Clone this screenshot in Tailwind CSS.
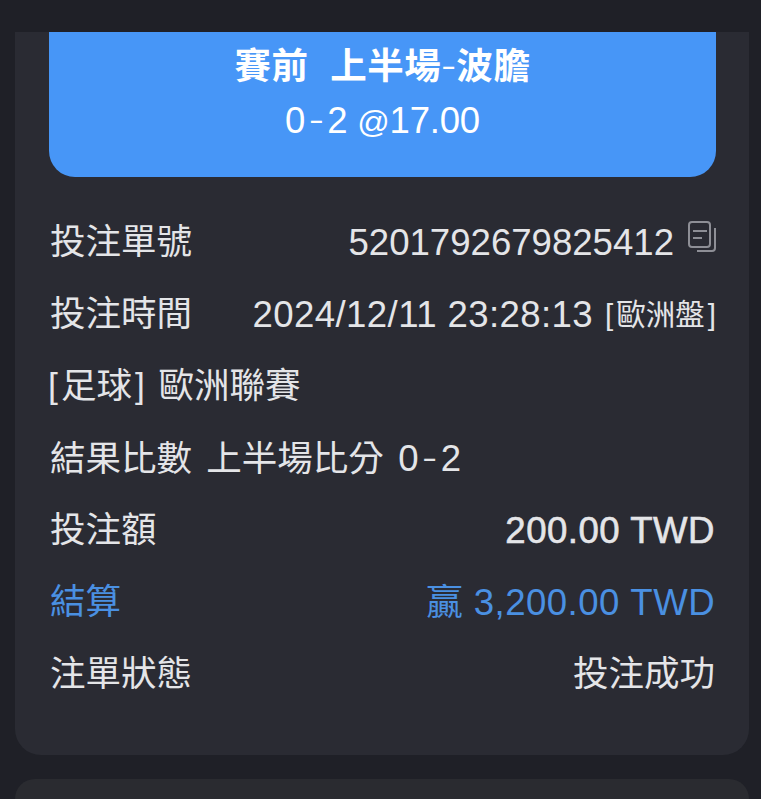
<!DOCTYPE html>
<html lang="zh-Hant">
<head>
    <meta charset="UTF-8">
    <title>注單詳情</title>
    <script src="https://cdn.jsdelivr.net/npm/@tailwindcss/browser@4"></script>
</head>
<body class="bg-[#1f2027] h-[799px] w-[761px] overflow-hidden font-['Liberation_Sans','Noto_Sans_CJK_TC',sans-serif] text-[#e4e5e8]">
    <div class="pt-[32px] pl-[15px] pr-[12px]">
        <!-- Bet card -->
        <div class="h-[723px] bg-[#2a2b33] rounded-b-[26px] px-[34px]">
            <div class="h-[145px] bg-[#4796f7] rounded-b-[26px] text-white text-center pt-[15px] -mr-[1px]">
                <div class="text-[36.5px] leading-[40px] font-bold whitespace-pre tracking-[0.6px]">賽前  上半場<span class="text-[22px] leading-none font-bold mx-[1px] relative -top-[5px]">–</span>波膽</div>
                <div class="text-[36.5px] leading-[40px] mt-[14px] tracking-[-0.2px]">0<span class="text-[22px] leading-none font-bold mx-[5px] relative -top-[5px]">–</span>2 <span class="text-[32px] leading-none">@</span>17.00</div>
            </div>

            <div class="mt-[30px] text-[35.5px] -mr-[1px]">
                <div class="h-[72px] flex items-center justify-between pl-[1px]">
                    <span>投注單號</span>
                    <span class="flex items-center">
                        <span class="text-[36.6px]">5201792679825412</span>
                        <svg class="ml-[14px] -mt-[12px]" width="28" height="32" viewBox="0 0 28 32" fill="none" stroke="#8e8f96" stroke-width="2">
                            <path d="M1 4a3 3 0 0 1 3-3h15a3 3 0 0 1 3 3v19a3 3 0 0 1-3 3h-15a3 3 0 0 1-3-3z"/>
                            <path d="M27 7v20a3 3 0 0 1-3 3h-15"/>
                            <path d="M5 10h14M5 17h9"/>
                        </svg>
                    </span>
                </div>
                <div class="h-[72px] flex items-center justify-between pl-[1px]">
                    <span>投注時間</span>
                    <span class="flex items-center">
                        <span class="text-[36.6px] tracking-[0.4px]">2024/12/11 23:28:13</span>
                        <span class="text-[29.5px] ml-[12px]">[<span class="mx-[3px]">歐洲盤</span>]</span>
                    </span>
                </div>
                <div class="h-[72px] flex items-center -ml-[1px] whitespace-pre [word-spacing:4px]"><span>[<span class="mx-[3px]">足球</span>] 歐洲聯賽</span></div>
                <div class="h-[72px] flex items-center pl-[1px] whitespace-pre"><span class="[word-spacing:4.5px]">結果比數 上半場比分 <span class="text-[36.6px]">0<span class="text-[22px] leading-none font-bold mx-[5px] relative -top-[5px]">–</span>2</span></span></div>
                <div class="h-[72px] flex items-center justify-between pl-[1px] pr-[1px]">
                    <span>投注額</span>
                    <span class="text-[36.6px] tracking-[0.5px] [-webkit-text-stroke:0.6px_#e4e5e8]">200.00 TWD</span>
                </div>
                <div class="h-[72px] flex items-center justify-between pl-[1px] pr-[1px] text-[#4a90e2]">
                    <span>結算</span>
                    <span class="text-[36.6px] tracking-[0.45px]">贏 3,200.00 TWD</span>
                </div>
                <div class="h-[72px] flex items-center justify-between pl-[1px] pr-[1px]">
                    <span>注單狀態</span>
                    <span>投注成功</span>
                </div>
            </div>
        </div>

        <!-- Next card, cut off by the window -->
        <div class="mt-[24px] h-[20px] bg-[#2a2b30] rounded-t-[26px]"></div>
    </div>
</body>
</html>
